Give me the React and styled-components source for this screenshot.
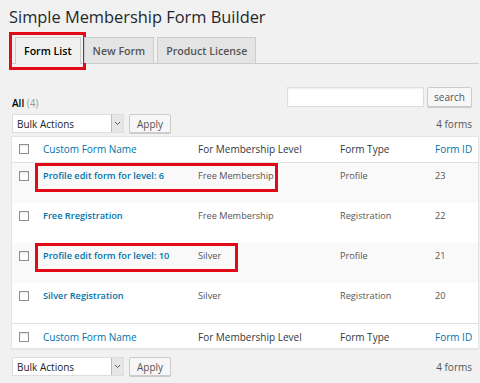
import React from 'react';
import styled, { createGlobalStyle } from 'styled-components';

const GlobalStyle = createGlobalStyle`
  html, body {
    margin: 0;
    background: #f1f1f1;
    font-family: "Open Sans", "Liberation Sans", sans-serif;
    color: #444;
  }
`;

const Page = styled.div`
  width: 480px;
  height: 383px;
  overflow: hidden;
  padding: 5px 1px 0 9px;
  box-sizing: border-box;
`;

const Title = styled.h1`
  margin: 0;
  font-size: 16.4px;
  font-weight: 400;
  line-height: 23px;
  color: #23282d;
`;

const TabNav = styled.div`
  display: flex;
  gap: 3px;
  margin-top: 9px;
  padding-left: 6px;
  border-bottom: 1px solid #ccc;
  height: 26px;
`;

const Tab = styled.div`
  position: relative;
  box-sizing: border-box;
  padding: 0 8px;
  display: flex;
  align-items: center;
  font-size: 10.6px;
  font-weight: 600;
  border: 1px solid #ccc;
  border-bottom: none;
  background: ${p => (p.$active ? '#f1f1f1' : '#e4e4e4')};
  color: ${p => (p.$active ? '#000' : '#555')};
  margin-bottom: ${p => (p.$active ? '-1px' : '0')};
  height: ${p => (p.$active ? '27px' : '26px')};
`;

const Highlight = styled.div`
  position: absolute;
  border: 3px solid #e30a17;
  pointer-events: none;
  top: ${p => p.$top}px;
  left: ${p => p.$left}px;
  width: ${p => p.$width}px;
  height: ${p => p.$height}px;
  box-sizing: border-box;
`;

const FilterBar = styled.div`
  display: flex;
  justify-content: space-between;
  align-items: flex-end;
  margin-top: 23px;
  padding: 0 7px 0 3px;
`;

const Views = styled.div`
  font-size: 10px;
  color: #000;
  font-weight: 600;
  margin-bottom: -3px;
  span {
    color: #999;
    font-weight: 400;
  }
`;

const SearchBox = styled.div`
  display: flex;
  gap: 3px;
`;

const SearchInput = styled.div`
  width: 137px;
  height: 20px;
  box-sizing: border-box;
  background: #fff;
  border: 1px solid #ddd;
  box-shadow: inset 0 1px 2px rgba(0, 0, 0, 0.07);
`;

const Button = styled.div`
  height: ${p => p.$h || 20}px;
  box-sizing: border-box;
  padding: 0 ${p => p.$pad || 7}px;
  display: flex;
  align-items: center;
  font-size: 10px;
  color: #555;
  background: #f7f7f7;
  border: 1px solid #ccc;
  border-radius: 2px;
  box-shadow: 0 1px 0 #ccc;
`;

const TableNav = styled.div`
  display: flex;
  justify-content: space-between;
  align-items: center;
  padding: 0 7px 0 3px;
  margin: ${p => p.$margin};
`;

const Actions = styled.div`
  display: flex;
  gap: 5px;
  align-items: center;
`;

const Select = styled.div`
  width: 112px;
  height: 19px;
  box-sizing: border-box;
  display: flex;
  align-items: center;
  background: #fff;
  border: 1px solid #ddd;
  font-size: 10px;
  color: #222;
  padding-left: 4px;
  position: relative;
`;

const SelectArrow = styled.div`
  position: absolute;
  right: 0;
  top: 0;
  bottom: 0;
  width: 11px;
  background: #e6e6e6;
  border-left: 1px solid #bbb;
  display: flex;
  align-items: center;
  justify-content: center;
`;

const Count = styled.div`
  font-size: 10px;
  color: #555;
`;

const Table = styled.div`
  margin-left: 2px;
  background: #fff;
  border: 1px solid #e5e5e5;
  box-shadow: 0 1px 1px rgba(0, 0, 0, 0.04);
`;

const Row = styled.div`
  position: relative;
  display: grid;
  grid-template-columns: 31px 155px 142px 95px 1fr;
  height: ${p => p.$h}px;
  box-sizing: border-box;
  padding-top: ${p => p.$pt}px;
  background: ${p => (p.$striped ? '#f9f9f9' : '#fff')};
  border-top: ${p => (p.$lineTop ? '1px solid #e1e1e1' : 'none')};
  border-bottom: ${p => (p.$lineBottom ? '1px solid #e1e1e1' : 'none')};
`;

const Cell = styled.div`
  font-size: ${p => (p.$head ? 10 : 9.2)}px;
  line-height: 14px;
  font-weight: ${p => (p.$bold ? 600 : 400)};
  color: ${p => (p.$link ? '#0073aa' : p.$head ? '#32373c' : '#555')};
  white-space: nowrap;
`;

const CheckCell = styled.div`
  display: flex;
  padding-left: 7px;
  padding-top: 2px;
`;

const Checkbox = styled.div`
  width: 10px;
  height: 10px;
  box-sizing: border-box;
  border: 1px solid #8c8f94;
  background: #fff;
  box-shadow: inset 0 1px 2px rgba(0, 0, 0, 0.1);
`;

const forms = [
  { name: 'Profile edit form for level: 6', level: 'Free Membership', type: 'Profile', id: 23, mark: 243 },
  { name: 'Free Rregistration', level: 'Free Membership', type: 'Registration', id: 22 },
  { name: 'Profile edit form for level: 10', level: 'Silver', type: 'Profile', id: 21, mark: 203 },
  { name: 'Silver Registration', level: 'Silver', type: 'Registration', id: 20 },
];

const HeadRow = ({ lineTop, lineBottom, h, pt }) => (
  <Row $h={h} $pt={pt} $lineTop={lineTop} $lineBottom={lineBottom}>
    <CheckCell><Checkbox /></CheckCell>
    <Cell $head $link>Custom Form Name</Cell>
    <Cell $head>For Membership Level</Cell>
    <Cell $head>Form Type</Cell>
    <Cell $head $link>Form ID</Cell>
  </Row>
);

const BulkBar = ({ margin }) => (
  <TableNav $margin={margin}>
    <Actions>
      <Select>
        Bulk Actions
        <SelectArrow>
          <svg width="7" height="5" viewBox="0 0 7 5">
            <path d="M1 1l2.5 2.5L6 1" fill="none" stroke="#555" strokeWidth="1" />
          </svg>
        </SelectArrow>
      </Select>
      <Button $h={19} $pad={7}>Apply</Button>
    </Actions>
    <Count>4 forms</Count>
  </TableNav>
);

export default function App() {
  return (
    <Page>
      <GlobalStyle />
      <Title>Simple Membership Form Builder</Title>
      <TabNav>
        <Tab $active>
          Form List
          <Highlight $top={-6} $left={-7} $width={77} $height={38} />
        </Tab>
        <Tab>New Form</Tab>
        <Tab>Product License</Tab>
      </TabNav>
      <FilterBar>
        <Views>All <span>(4)</span></Views>
        <SearchBox>
          <SearchInput />
          <Button $pad={6}>search</Button>
        </SearchBox>
      </FilterBar>
      <BulkBar margin="7px 0 3px" />
      <Table>
        <HeadRow h={26} pt={5} lineBottom />
        {forms.map((f, i) => (
          <Row key={f.id} $h={40} $pt={6} $striped={i % 2 === 0}>
            <CheckCell><Checkbox /></CheckCell>
            <Cell $link $bold>{f.name}</Cell>
            <Cell>{f.level}</Cell>
            <Cell>{f.type}</Cell>
            <Cell>{f.id}</Cell>
            {f.mark && <Highlight $top={0} $left={23} $width={f.mark} $height={29} />}
          </Row>
        ))}
        <HeadRow h={25} pt={6} lineTop />
      </Table>
      <BulkBar margin="8px 0 0" />
    </Page>
  );
}
